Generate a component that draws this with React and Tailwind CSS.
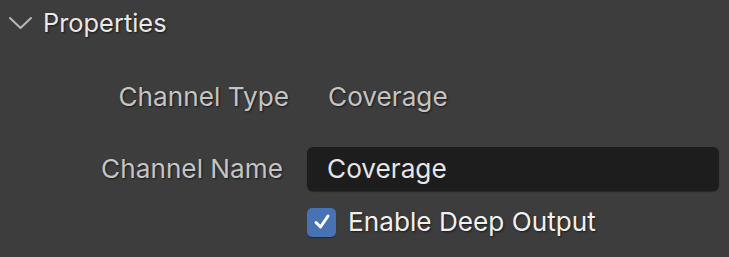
export default function App() {
  return (
    <div className="w-[729px] h-[257px] bg-[#3d3d3d] overflow-hidden font-['Inter',sans-serif] [text-shadow:1px_1px_2px_rgba(0,0,0,0.6)]">
      {/* panel header */}
      <div className="flex items-center h-[46px] pl-[8px]">
        <svg width="25" height="14" viewBox="0 0 25 14" className="mr-[10px]">
          <path d="M2 2 L12.5 12 L23 2" fill="none" stroke="#b8b8b8" strokeWidth="2" strokeLinecap="round" strokeLinejoin="round" />
        </svg>
        <span className="text-[25.4px] text-[#e8e8e8] leading-none">Properties</span>
      </div>

      <div className="flex items-center h-[50px] mt-[26px]">
        <div className="w-[289px] text-right text-[26.2px] text-[#c4c4c4] leading-none">Channel Type</div>
        <div className="pl-[39px] text-[26.2px] text-[#c4c4c4] leading-none">Coverage</div>
      </div>

      <div className="flex items-center h-[44px] mt-[25px]">
        <div className="w-[283px] text-right text-[26.2px] text-[#c4c4c4] leading-none">Channel Name</div>
        <div className="ml-[24px] w-[412px] h-[44px] rounded-[6px] bg-[#1d1d1d] flex items-center pl-[20px] text-[26.2px] text-[#e6e6e6] leading-none [text-shadow:none] shadow-[0_1px_1px_rgba(0,0,0,0.35)]">
          Coverage
        </div>
      </div>

      <div className="flex items-center h-[30px] mt-[16px] pl-[307px]">
        <div className="w-[29px] h-[29px] rounded-[5px] bg-[#4772b3] flex items-center justify-center shadow-[0_1px_1px_rgba(0,0,0,0.35)]">
          <svg width="20" height="20" viewBox="0 0 20 20">
            <path d="M4 10.5 L8.5 15 L16 4" fill="none" stroke="#ffffff" strokeWidth="3" strokeLinecap="round" strokeLinejoin="round" />
          </svg>
        </div>
        <span className="ml-[12px] text-[26.2px] text-[#f0f0f0] leading-none">Enable Deep Output</span>
      </div>
    </div>
  );
}
